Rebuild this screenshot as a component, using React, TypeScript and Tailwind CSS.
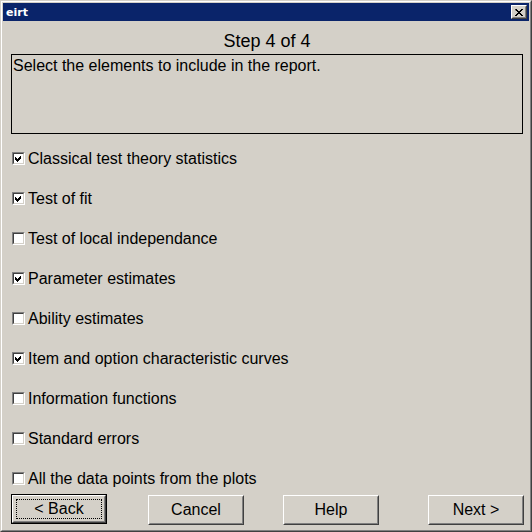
import React, { useState } from 'react';

const items: { label: string; checked: boolean }[] = [
  { label: 'Classical test theory statistics', checked: true },
  { label: 'Test of fit', checked: true },
  { label: 'Test of local independance', checked: false },
  { label: 'Parameter estimates', checked: true },
  { label: 'Ability estimates', checked: false },
  { label: 'Item and option characteristic curves', checked: true },
  { label: 'Information functions', checked: false },
  { label: 'Standard errors', checked: false },
  { label: 'All the data points from the plots', checked: false },
];

const CheckBox: React.FC<{ checked: boolean; onClick: () => void }> = ({ checked, onClick }) => (
  <div
    onClick={onClick}
    className="w-[13px] h-[13px] border border-t-[#808080] border-l-[#808080] border-b-white border-r-white flex-shrink-0"
  >
    <div className="w-full h-full border border-t-[#404040] border-l-[#404040] border-b-[#d4d0c8] border-r-[#d4d0c8] bg-white relative">
      {checked && (
        <svg width="9" height="9" viewBox="0 0 9 9" className="absolute left-0 top-0">
          <path d="M1 3h1v1h1v1h1v-1h1v-1h1v-1h1v1h-1v1h-1v1h-1v1h-1v-1h-1v-1h-1z M1 4h1v1h1v1h1v-1h1v-1h1v-1h1v1h-1v1h-1v1h-1v1h-1v-1h-1v-1h-1z M1 5h1v1h1v1h1v-1h1v-1h1v-1h1v1h-1v1h-1v1h-1v1h-1v-1h-1v-1h-1z" fill="#000" />
        </svg>
      )}
    </div>
  </div>
);

const Button: React.FC<{ label: string; isDefault?: boolean; className?: string }> = ({ label, isDefault, className }) => (
  <div className={`w-[96px] h-[30px] flex-shrink-0 ${isDefault ? 'border border-black' : ''} ${className ?? ''}`}>
    <div className="w-full h-full border border-t-white border-l-white border-b-[#404040] border-r-[#404040]">
      <div className="w-full h-full border border-t-[#d4d0c8] border-l-[#d4d0c8] border-b-[#808080] border-r-[#808080] flex items-center justify-center text-[16px] text-black relative">
        {isDefault && (
          <div className="absolute inset-[2px] border border-dotted border-black" />
        )}
        <span className="leading-none">{label}</span>
      </div>
    </div>
  </div>
);

export default function App() {
  const [checks, setChecks] = useState(items.map((i) => i.checked));

  return (
    <div
      className="w-[532px] h-[532px] bg-[#d4d0c8] border border-t-[#d4d0c8] border-l-[#d4d0c8] border-b-[#404040] border-r-[#404040]"
      style={{ fontFamily: '"Liberation Sans", Arial, sans-serif' }}
    >
      <div className="w-full h-full border border-t-white border-l-white border-b-[#808080] border-r-[#808080] p-px flex flex-col">
        {/* Title bar */}
        <div className="h-[18px] bg-[#0a246a] flex items-center justify-between pl-[3px] pr-[2px] flex-shrink-0">
          <span className="text-white text-[11px] font-bold leading-none" style={{ fontFamily: '"DejaVu Sans", sans-serif' }}>
            eirt
          </span>
          <div className="w-[16px] h-[14px] border border-t-white border-l-white border-b-[#404040] border-r-[#404040] bg-[#d4d0c8]">
            <div className="w-full h-full border border-t-[#d4d0c8] border-l-[#d4d0c8] border-b-[#808080] border-r-[#808080] flex items-center justify-center">
              <svg width="8" height="7" viewBox="0 0 8 7">
                <path d="M0 0h2v1h1v1h2v-1h1v-1h2v1h-1v1h-1v1h-1v1h1v1h1v1h1v1h-2v-1h-1v-1h-2v1h-1v1h-2v-1h1v-1h1v-1h1v-1h-1v-1h-1z" fill="#000" />
              </svg>
            </div>
          </div>
        </div>

        {/* Body */}
        <div className="flex-1 flex flex-col pl-[8px] pr-[6px]">
          <div className="h-[33px] flex items-end justify-center text-[18px] text-black leading-none pb-[4px]">
            Step 4 of 4
          </div>
          <div className="h-[80px] border border-black text-[16px] text-black leading-[18px] pt-[2px] pl-px">
            Select the elements to include in the report.
          </div>

          <div className="flex flex-col pt-[18px]">
            {items.map((it, i) => (
              <div key={it.label} className="h-[40px] pl-px">
                <div className="h-[13px] flex items-center gap-[3px]">
                  <CheckBox
                    checked={checks[i]}
                    onClick={() => setChecks((c) => c.map((v, j) => (j === i ? !v : v)))}
                  />
                  <span className="text-[16px] leading-[18px] text-black">{it.label}</span>
                </div>
              </div>
            ))}
          </div>

          <div className="flex items-start mt-[-18px]">
            <Button label="< Back" isDefault />
            <Button label="Cancel" className="ml-[41px] mt-px" />
            <Button label="Help" className="ml-[39px] mt-px" />
            <Button label="Next >" className="ml-[49px] mt-px" />
          </div>
        </div>
      </div>
    </div>
  );
}
